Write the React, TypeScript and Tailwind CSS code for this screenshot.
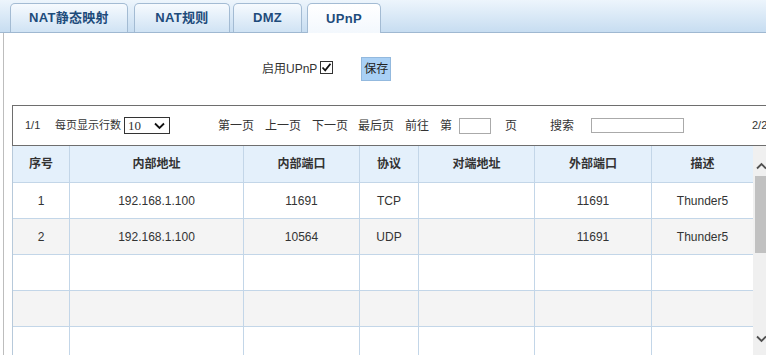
import React from "react";

const font = { fontFamily: '"Liberation Sans", "Noto Sans CJK SC", sans-serif' };

const cols = [57, 174, 116, 59, 116, 117, 101];
const headers = ["序号", "内部地址", "内部端口", "协议", "对端地址", "外部端口", "描述"];
const rows: string[][] = [
  ["1", "192.168.1.100", "11691", "TCP", "", "11691", "Thunder5"],
  ["2", "192.168.1.100", "10564", "UDP", "", "11691", "Thunder5"],
  ["", "", "", "", "", "", ""],
  ["", "", "", "", "", "", ""],
  ["", "", "", "", "", "", ""],
];

function Tab({ label, w, ml, active }: { label: string; w: number; ml: number; active?: boolean }) {
  return (
    <div
      className={
        "flex items-center justify-center rounded-t-[5px] border border-b-0 border-[#a3bbd3] text-[13px] font-bold tracking-[0.3px] text-[#1d4b7b] " +
        (active
          ? "h-[30px] -mb-px bg-gradient-to-b from-[#ffffff] to-[#f3f8fd]"
          : "h-[29px] bg-gradient-to-b from-[#f6fafe] to-[#d0e3f4]")
      }
      style={{ width: w, marginLeft: ml }}
    >
      <span>{label}</span>
    </div>
  );
}

export default function App() {
  return (
    <div className="relative w-[766px] h-[355px] overflow-hidden bg-white text-[#333]" style={font}>
      {/* tab bar */}
      <div className="flex items-end h-[33px] border-b border-[#9fb8d1] bg-gradient-to-b from-[#edf5fc] to-[#c7ddf1]">
        <Tab label="NAT静态映射" w={118} ml={10} />
        <Tab label="NAT规则" w={96} ml={6} />
        <Tab label="DMZ" w={69} ml={3} />
        <Tab label="UPnP" w={74} ml={5} active />
      </div>

      {/* content */}
      <div className="flex h-[322px]">
        <div className="ml-[3px] w-px h-full bg-[#bdbdbd] shrink-0" />
        <div className="flex-1">
          <div className="flex items-center h-[24px] mt-[24px] pl-[258px]">
            <span className="text-[12px] text-[#333]">启用UPnP</span>
            <span className="ml-[3px] mt-[-4px] flex items-center justify-center w-[13px] h-[13px] border border-[#333] bg-white">
              <svg width="11" height="11" viewBox="0 0 11 11">
                <path d="M1.5 5.5 L4.2 8.3 L9.5 1.8" fill="none" stroke="#111" strokeWidth="1.8" />
              </svg>
            </span>
            <span className="ml-[28px] flex items-center justify-center w-[30px] h-[24px] bg-[#a9d0f5] border border-[#93b9de] text-[12px] text-[#222]">
              保存
            </span>
          </div>

          {/* table block */}
          <div className="ml-[8px] mt-[24px] w-[800px]">
            {/* toolbar */}
            <div className="flex items-center h-[41px] border-t border-l border-b border-[#6e6e6e] text-[12px] text-[#333] pl-[12px]">
              <span className="w-[30px] text-[11px]">1/1</span>
              <span className="w-[69px] text-[11px]">每页显示行数</span>
              <span className="w-[46px] h-[17px] border border-[#333] flex items-center justify-between pl-[3px] pr-[4px]">
                <span className="text-[13px] leading-none" style={{ fontFamily: '"Liberation Serif", serif' }}>10</span>
                <svg width="11" height="8" viewBox="0 0 11 8">
                  <path d="M1 1.5 L5.5 6 L10 1.5" fill="none" stroke="#111" strokeWidth="1.8" />
                </svg>
              </span>
              <span className="w-[48px]" />
              <span className="w-[47px]">第一页</span>
              <span className="w-[47px]">上一页</span>
              <span className="w-[46px]">下一页</span>
              <span className="w-[47px]">最后页</span>
              <span className="w-[35px]">前往</span>
              <span className="w-[19px]">第</span>
              <span className="w-[32px] h-[16px] border border-[#aaa]" />
              <span className="w-[14px]" />
              <span className="w-[45px]">页</span>
              <span className="w-[41px]">搜索</span>
              <span className="w-[93px] h-[15px] border border-[#aaa]" />
              <span className="w-[68px]" />
              <span className="text-[11px]">2/2</span>
            </div>

            {/* grid */}
            <div className="flex">
              <div className="border-l border-[#b7c9da]">
                <div className="flex h-[37px] bg-[#e4f0fb]">
                  {headers.map((h, i) => (
                    <div
                      key={i}
                      className={
                        "flex items-center justify-center border-b border-[#c3d6e8] text-[12px] font-bold text-[#333] " +
                        (i < 6 ? "border-r" : "")
                      }
                      style={{ width: cols[i] }}
                    >
                      {h}
                    </div>
                  ))}
                </div>
                {rows.map((r, ri) => (
                  <div key={ri} className={"flex h-[36px] " + (ri % 2 === 1 ? "bg-[#f4f4f4]" : "bg-white")}>
                    {r.map((c, i) => (
                      <div
                        key={i}
                        className={
                          "flex items-center justify-center border-b border-[#c3d6e8] text-[12px] text-[#333] " +
                          (i < 6 ? "border-r" : "")
                        }
                        style={{ width: cols[i] }}
                      >
                        {c}
                      </div>
                    ))}
                  </div>
                ))}
              </div>
              {/* scrollbar */}
              <div className="w-[17px] h-[220px] bg-[#f0f0f0] flex flex-col items-center">
                <div className="h-[30px] w-full flex items-center justify-center pt-[10px]">
                  <svg width="11" height="8" viewBox="0 0 11 8">
                    <path d="M1 6.5 L5.5 2 L10 6.5" fill="none" stroke="#505050" strokeWidth="1.8" />
                  </svg>
                </div>
                <div className="w-[13px] h-[77px] bg-[#c1c1c1]" />
                <div className="h-[82px]" />
                <div className="w-full flex items-center justify-center">
                  <svg width="11" height="8" viewBox="0 0 11 8">
                    <path d="M1 1.5 L5.5 6 L10 1.5" fill="none" stroke="#505050" strokeWidth="1.8" />
                  </svg>
                </div>
              </div>
            </div>
          </div>
        </div>
      </div>
    </div>
  );
}
